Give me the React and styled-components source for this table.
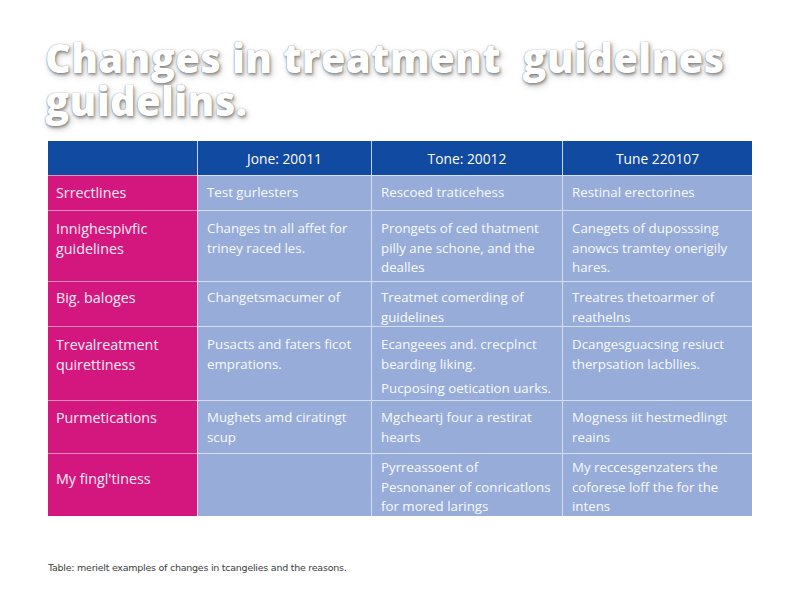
import React from 'react';
import styled, { createGlobalStyle } from 'styled-components';

const GlobalStyle = createGlobalStyle`
  html, body {
    margin: 0;
    padding: 0;
    background: #ffffff;
  }
  body {
    font-family: 'Open Sans', 'Noto Sans', sans-serif;
  }
`;

const Page = styled.div`
  width: 800px;
  height: 600px;
  box-sizing: border-box;
  padding: 36px 48px 0 48px;
  display: flex;
  flex-direction: column;
`;

const Title = styled.h1`
  margin: 0 0 0 -3px;
  font-family: 'Open Sans', 'Noto Sans', sans-serif;
  font-weight: 800;
  font-size: 40px;
  line-height: 43px;
  letter-spacing: 0.3px;
  color: #ffffff;
  white-space: pre;
  text-shadow:
    0 0 1px rgba(0, 0, 0, 0.5),
    1px 2px 3px rgba(0, 0, 0, 0.35),
    2px 3px 7px rgba(0, 0, 0, 0.2);
`;

const Table = styled.div`
  margin-top: 19px;
  width: 704px;
  display: grid;
  grid-template-columns: 149px 174px 191px 190px;
  background: #c9d3ea;
`;

const HeadCell = styled.div`
  height: 34px;
  background: #114aa1;
  color: #ffffff;
  font-size: 13.8px;
  display: flex;
  align-items: center;
  justify-content: center;
  border-left: ${p => (p.first ? 'none' : '1px solid #c6d2ee')};
`;

const LabelCell = styled.div`
  height: ${p => p.h}px;
  box-sizing: border-box;
  background: #d4177e;
  color: #fcecf4;
  font-size: 14.3px;
  line-height: 20px;
  padding: ${p => p.pad || 8}px 8px 0 8px;
  border-top: 1px solid #e98cbc;
`;

const BodyCell = styled.div`
  height: ${p => p.h}px;
  box-sizing: border-box;
  background: #97acd8;
  color: #f8faff;
  font-size: 13.3px;
  line-height: 19.5px;
  padding: ${p => p.pad || 8}px 8px 0 9px;
  border-top: 1px solid #d6def1;
  border-left: 1px solid #d6def1;
`;

const Para = styled.div`
  margin-top: ${p => p.gap || 0}px;
`;

const Caption = styled.p`
  margin: 46px 0 0 0;
  font-family: 'DejaVu Sans', 'Open Sans', sans-serif;
  font-size: 9.5px;
  color: #3c3c3c;
  letter-spacing: -0.25px;
`;

const headers = ['', 'Jone: 20011', 'Tone: 20012', 'Tune 220107'];

const rows = [
  {
    h: 35,
    pad: 7,
    label: 'Srrectlines',
    cells: [['Test gurlesters'], ['Rescoed traticehess'], ['Restinal erectorines']],
  },
  {
    h: 71,
    label: 'Innighespivfic guidelines',
    cells: [
      ['Changes tn all affet for triney raced les.'],
      ['Prongets of ced thatment pilly ane schone, and the dealles'],
      ['Canegets of duposssing anowcs tramtey onerigily hares.'],
    ],
  },
  {
    h: 45,
    pad: 6,
    label: 'Big. baloges',
    cells: [
      ['Changetsmacumer of'],
      ['Treatmet comerding of guidelines'],
      ['Treatres thetoarmer of reathelns'],
    ],
  },
  {
    h: 74,
    label: 'Trevalreatment quirettiness',
    cells: [
      ['Pusacts and faters ficot emprations.'],
      ['Ecangeees and. crecplnct bearding liking.', 'Pucposing oetication uarks.'],
      ['Dcangesguacsing resiuct therpsation lacbllies.'],
    ],
  },
  {
    h: 53,
    pad: 7,
    label: 'Purmetications',
    cells: [
      ['Mughets amd ciratingt scup'],
      ['Mgcheartj four a restirat hearts'],
      ['Mogness iit hestmedlingt reains'],
    ],
  },
  {
    h: 63,
    pad: 4,
    label: 'My fingl\'tiness',
    labelPad: 15,
    cells: [
      [''],
      ['Pyrreassoent of Pesnonaner of conricatlons for mored larings'],
      ['My reccesgenzaters the coforese loff the for the intens'],
    ],
  },
];

export default function App() {
  return (
    <>
      <GlobalStyle />
      <Page>
        <Title>{'Changes in treatment  guidelnes\nguidelins.'}</Title>
        <Table>
          {headers.map((t, i) => (
            <HeadCell key={i} first={i === 0}>{t}</HeadCell>
          ))}
          {rows.map((r, ri) => (
            <React.Fragment key={ri}>
              <LabelCell h={r.h} pad={r.labelPad || r.pad}>{r.label}</LabelCell>
              {r.cells.map((c, ci) => (
                <BodyCell key={ci} h={r.h} pad={r.pad}>
                  {c.map((p, pi) => (
                    <Para key={pi} gap={pi > 0 ? 5 : 0}>{p}</Para>
                  ))}
                </BodyCell>
              ))}
            </React.Fragment>
          ))}
        </Table>
        <Caption>Table: merielt examples of changes in tcangelies and the reasons.</Caption>
      </Page>
    </>
  );
}
